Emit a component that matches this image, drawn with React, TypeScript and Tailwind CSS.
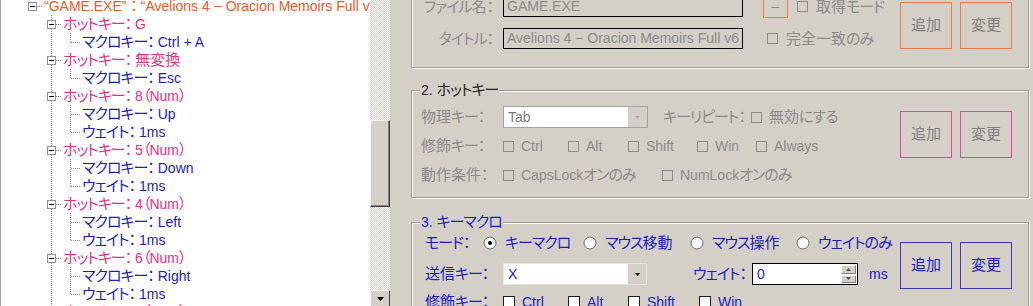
// kanji runs, then kana / full-width punctuation runs
const JP = /([\u3400-\u9fff]+)|([\u3000-\u30ff\uff00-\uffef]+)/;

function T({ s }: { s: string }) {
  const parts = s.split(JP);
  const out: React.ReactNode[] = [];
  for (let i = 0; i < parts.length; i += 3) {
    if (parts[i]) out.push(parts[i]);
    if (parts[i + 1])
      out.push(
        <span key={i + 1} className="text-[15px]">
          {parts[i + 1]}
        </span>,
      );
    if (parts[i + 2])
      out.push(
        <span key={i + 2} className="text-[15px] tracking-[-1px] [font-feature-settings:'palt']">
          {parts[i + 2]}
        </span>,
      );
  }
  return <>{out}</>;
}

type Node = { lv: 0 | 1 | 2; text: string; last?: boolean };

const tree: Node[] = [
  { lv: 0, text: "“GAME.EXE” ： “Avelions 4 − Oracion Memoirs Full v6”" },
  { lv: 1, text: "ホットキー： G" },
  { lv: 2, text: "マクロキー： Ctrl + A", last: true },
  { lv: 1, text: "ホットキー： 無変換" },
  { lv: 2, text: "マクロキー： Esc", last: true },
  { lv: 1, text: "ホットキー： 8（Num）" },
  { lv: 2, text: "マクロキー： Up" },
  { lv: 2, text: "ウェイト： 1ms", last: true },
  { lv: 1, text: "ホットキー： 5（Num）" },
  { lv: 2, text: "マクロキー： Down" },
  { lv: 2, text: "ウェイト： 1ms", last: true },
  { lv: 1, text: "ホットキー： 4（Num）" },
  { lv: 2, text: "マクロキー： Left" },
  { lv: 2, text: "ウェイト： 1ms", last: true },
  { lv: 1, text: "ホットキー： 6（Num）" },
  { lv: 2, text: "マクロキー： Right" },
  { lv: 2, text: "ウェイト： 1ms", last: true },
  { lv: 1, text: "ホットキー： 2（Num）" },
];

const levelColor = ["text-[#ee5a24]", "text-[#e5307f]", "text-[#1c1cbc]"];

function Guide({ v, h, box }: { v?: "full" | "top"; h?: boolean; box?: boolean }) {
  return (
    <svg width="19" height="18" className="shrink-0" shapeRendering="crispEdges">
      {v && (
        <line x1="9.5" y1="0" x2="9.5" y2={v === "full" ? 18 : 10} stroke="#8a8a8a" strokeDasharray="1 1" />
      )}
      {h && <line x1="10" y1="9.5" x2="19" y2="9.5" stroke="#8a8a8a" strokeDasharray="1 1" />}
      {box && (
        <>
          <rect x="5.5" y="5.5" width="8" height="8" fill="#fff" stroke="#8f8f8f" />
          <line x1="7" y1="9.5" x2="12" y2="9.5" stroke="#000" />
        </>
      )}
    </svg>
  );
}

function TreeRow({ n }: { n: Node }) {
  return (
    <div className="flex h-[18px] items-center">
      {n.lv === 0 ? <Guide h box /> : <Guide />}
      {n.lv === 1 && <Guide v="full" h box />}
      {n.lv === 2 && <Guide v="full" />}
      {n.lv === 2 && <Guide v={n.last ? "top" : "full"} h />}
      <span className={`ml-[2px] leading-[18px] ${levelColor[n.lv]}`}>
        <T s={n.text} />
      </span>
    </div>
  );
}

function Check({ on }: { on?: boolean }) {
  return on ? (
    <span className="h-[12px] w-[12px] shrink-0 border border-[#1a1a1a] bg-white" />
  ) : (
    <span className="h-[11px] w-[11px] shrink-0 border border-[#8c8c8c]" />
  );
}

function CheckItem({ label, on, className }: { label: string; on?: boolean; className?: string }) {
  return (
    <div className={`flex shrink-0 items-center gap-[7px] ${className ?? ""}`}>
      <Check on={on} />
      <span className="leading-[18px]">
        <T s={label} />
      </span>
    </div>
  );
}

function Radio({ checked }: { checked?: boolean }) {
  return (
    <svg width="14" height="14" className="shrink-0">
      <circle cx="7" cy="7" r="6" fill="#fff" stroke="#6a6a6a" />
      {checked && <circle cx="7" cy="7" r="2" fill="#000" />}
    </svg>
  );
}

function Buttons({ tone }: { tone: string }) {
  return (
    <div className="flex gap-[8px] pr-[16px]">
      {["追加", "変更"].map((t) => (
        <div key={t} className={`flex h-[47px] w-[52px] items-center justify-center border ${tone}`}>
          <T s={t} />
        </div>
      ))}
    </div>
  );
}

const group = "relative shrink-0 border border-[#9c9a94] shadow-[inset_1px_1px_0_#fff,1px_1px_0_#fff]";

export default function App() {
  return (
    <div className="flex h-[306px] w-[1033px] overflow-hidden whitespace-nowrap bg-[#d4d0c8] font-['Liberation_Sans','Noto_Sans_CJK_JP',sans-serif] text-[14px]">
      {/* tree view */}
      <div className="h-full w-[370px] shrink-0 overflow-hidden border-l border-[#a0a0a0] bg-white pl-[22px]">
        <div className="-mt-[3px]">
          {tree.map((n, i) => (
            <TreeRow key={i} n={n} />
          ))}
        </div>
      </div>

      {/* scrollbar */}
      <div className="flex h-full w-[20px] shrink-0 flex-col overflow-hidden bg-[repeating-conic-gradient(#d4d0c8_0_25%,#ffffff_0_50%)] bg-[length:2px_2px]">
        <div className="h-[120px] shrink-0" />
        <div className="h-[87px] shrink-0 border border-t-[#f4f4f4] border-l-[#f4f4f4] border-r-[#404040] border-b-[#404040] bg-[#d4d0c8] shadow-[inset_-1px_-1px_0_#808080]" />
        <div className="h-[83px] shrink-0" />
        <div className="flex h-[20px] shrink-0 justify-center border border-t-[#f4f4f4] border-l-[#f4f4f4] border-r-[#404040] border-b-[#404040] bg-[#d4d0c8] pt-[6px]">
          <svg width="7" height="4">
            <path d="M0 0h7L3.5 4z" fill="#000" />
          </svg>
        </div>
      </div>

      {/* settings */}
      <div className="flex min-w-0 flex-1 flex-col pl-[21px] pr-[4px]">
        {/* 1. window */}
        <div className={`${group} -mt-[18px] flex h-[86px] text-[#8a8a8a]`}>
          <div className="flex flex-1 flex-col gap-[11px] pt-[13px]">
            <div className="flex h-[21px] items-center">
              <span className="w-[91px] pr-[10px] text-right leading-[18px]">
                <T s="ファイル名：" />
              </span>
              <div className="flex h-[21px] w-[240px] items-center border border-black pl-[3px]">GAME.EXE</div>
              <div className="ml-[20px] flex h-[23px] w-[25px] items-center justify-center border border-[#ee7b45]">–</div>
              <CheckItem label="取得モード" className="ml-[9px] gap-[8px]" />
            </div>
            <div className="flex h-[21px] items-center">
              <span className="w-[91px] pr-[10px] text-right leading-[18px]">
                <T s="タイトル：" />
              </span>
              <div className="flex h-[21px] w-[240px] items-center overflow-hidden border border-black pl-[3px]">
                Avelions 4 − Oracion Memoirs Full v6
              </div>
              <CheckItem label="完全一致のみ" className="ml-[24px] gap-[8px]" />
            </div>
          </div>
          <div className="pt-[19px]">
            <Buttons tone="border-[#ee7b45] text-[#808080]" />
          </div>
        </div>

        {/* 2. hotkey */}
        <div className={`${group} mt-[22px] flex h-[108px] text-[#8a8a8a]`}>
          <span className="absolute -top-[10px] left-[8px] bg-[#d4d0c8] px-[1px] leading-[18px] text-[#222]">
            <T s="2. ホットキー" />
          </span>
          <div className="flex flex-1 flex-col gap-[7px] pl-[9px] pt-[15px]">
            <div className="flex h-[22px] items-center">
              <span className="w-[82px] leading-[18px]">
                <T s="物理キー：" />
              </span>
              <div className="flex h-[22px] w-[145px] border border-[#a3a3a3]">
                <div className="flex flex-1 items-center bg-white pl-[4px] text-[#7a7a7a]">Tab</div>
                <div className="flex w-[19px] items-center justify-center">
                  <svg width="5" height="3">
                    <path d="M0 0h5L2.5 3z" fill="#a8a8a8" />
                  </svg>
                </div>
              </div>
              <span className="ml-[15px] w-[88px] leading-[18px]">
                <T s="キーリピート：" />
              </span>
              <CheckItem label="無効にする" />
            </div>
            <div className="flex h-[22px] items-center">
              <span className="w-[82px] leading-[18px]">
                <T s="修飾キー：" />
              </span>
              <CheckItem label="Ctrl" className="w-[65px]" />
              <CheckItem label="Alt" className="w-[60px]" />
              <CheckItem label="Shift" className="w-[69px]" />
              <CheckItem label="Win" className="w-[59px]" />
              <CheckItem label="Always" />
            </div>
            <div className="flex h-[22px] items-center">
              <span className="w-[82px] leading-[18px]">
                <T s="動作条件：" />
              </span>
              <CheckItem label="CapsLockオンのみ" className="w-[159px]" />
              <CheckItem label="NumLockオンのみ" />
            </div>
          </div>
          <div className="pt-[20px]">
            <Buttons tone="border-[#e04898] text-[#808080]" />
          </div>
        </div>

        {/* 3. key macro */}
        <div className={`${group} mt-[24px] flex h-[100px] text-[#1c1cbc]`}>
          <span className="absolute -top-[10px] left-[8px] bg-[#d4d0c8] px-[1px] leading-[18px]">
            <T s="3. キーマクロ" />
          </span>
          <div className="flex flex-1 flex-col pl-[13px] pt-[10px]">
            <div className="flex h-[20px] items-center">
              <span className="w-[58px] leading-[18px]">
                <T s="モード：" />
              </span>
              {[
                { t: "キーマクロ", w: "w-[100px]", on: true },
                { t: "マウス移動", w: "w-[107px]" },
                { t: "マウス操作", w: "w-[106px]" },
                { t: "ウェイトのみ", w: "" },
              ].map((r) => (
                <div key={r.t} className={`flex shrink-0 items-center gap-[8px] ${r.w}`}>
                  <Radio checked={r.on} />
                  <span className="leading-[18px]">
                    <T s={r.t} />
                  </span>
                </div>
              ))}
            </div>
            <div className="mt-[10px] flex h-[22px] items-center">
              <span className="w-[78px] leading-[18px]">
                <T s="送信キー：" />
              </span>
              <div className="flex h-[22px] w-[144px] border border-[#e4e4e4] bg-white">
                <div className="flex flex-1 items-center pl-[4px]">X</div>
                <div className="flex w-[19px] items-center justify-center border-l border-[#f0f0f0] bg-[#d4d0c8]">
                  <svg width="5" height="3">
                    <path d="M0 0h5L2.5 3z" fill="#000" />
                  </svg>
                </div>
              </div>
              <span className="ml-[46px] w-[59px] leading-[18px]">
                <T s="ウェイト：" />
              </span>
              <div className="flex h-[22px] w-[106px] border border-black bg-white">
                <div className="flex flex-1 items-center pl-[4px]">0</div>
                <div className="my-[1px] mr-[1px] flex w-[15px] flex-col gap-px">
                  {["M0 3h5L2.5 0z", "M0 0h5L2.5 3z"].map((d) => (
                    <div key={d} className="flex flex-1 items-center justify-center border border-t-white border-l-white border-r-[#808080] border-b-[#808080] bg-[#d4d0c8]">
                      <svg width="5" height="3">
                        <path d={d} fill="#555" />
                      </svg>
                    </div>
                  ))}
                </div>
              </div>
              <span className="ml-[11px] leading-[18px]">ms</span>
            </div>
            <div className="mt-[7px] flex h-[20px] items-center">
              <span className="w-[78px] leading-[18px]">
                <T s="修飾キー：" />
              </span>
              <CheckItem label="Ctrl" on className="w-[65px]" />
              <CheckItem label="Alt" on className="w-[60px]" />
              <CheckItem label="Shift" on className="w-[71px]" />
              <CheckItem label="Win" on />
            </div>
          </div>
          <div className="pt-[19px]">
            <Buttons tone="border-[#3a3ab8] text-[#1c1cbc]" />
          </div>
        </div>
      </div>
    </div>
  );
}
